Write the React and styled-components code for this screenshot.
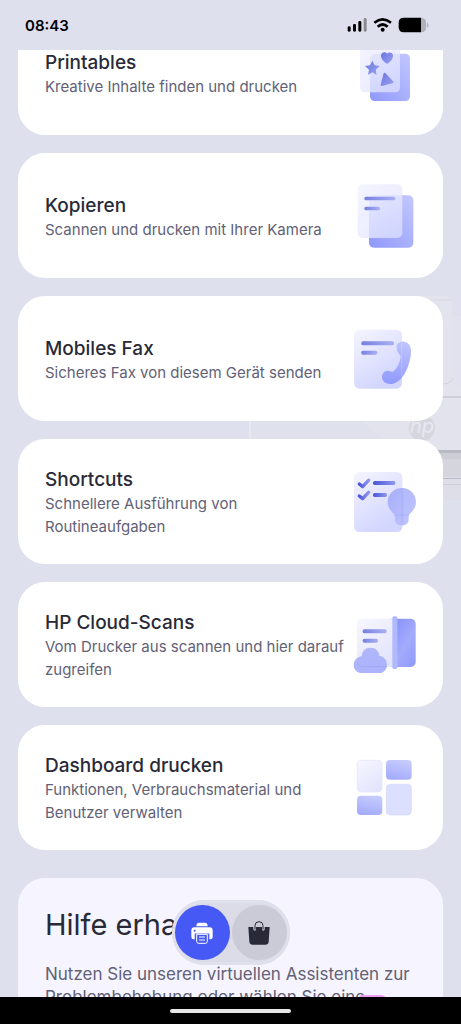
import React, { useLayoutEffect, useRef } from "react"
import styled, { createGlobalStyle } from "styled-components"

const cards = [
  {
    id: "printables",
    title: "Printables",
    text: "Kreative Inhalte finden und drucken",
    Icon: PrintablesIcon,
  },
  {
    id: "copy",
    title: "Kopieren",
    text: "Scannen und drucken mit Ihrer Kamera",
    Icon: CopyIcon,
  },
  {
    id: "fax",
    title: "Mobiles Fax",
    text: "Sicheres Fax von diesem Gerät senden",
    Icon: FaxIcon,
  },
  {
    id: "shortcuts",
    title: "Shortcuts",
    text: "Schnellere Ausführung von Routineaufgaben",
    Icon: ShortcutsIcon,
  },
  {
    id: "cloud-scans",
    title: "HP Cloud-Scans",
    text: "Vom Drucker aus scannen und hier darauf zugreifen",
    Icon: CloudScansIcon,
  },
  {
    id: "dashboard",
    title: "Dashboard drucken",
    text: "Funktionen, Verbrauchsmaterial und Benutzer verwalten",
    Icon: DashboardIcon,
  },
]

const START_SCROLL = 40

export default function App() {
  const scroller = useRef(null)

  useLayoutEffect(() => {
    scroller.current.scrollTop = START_SCROLL
  }, [])

  return (
    <>
      <GlobalStyle />
      <S_Page>
        <Gradients />
        <PrinterBackdrop />
        <S_StatusBar>
          <S_Time>08:43</S_Time>
          <StatusIcons />
        </S_StatusBar>
        <S_Scroller ref={scroller}>
          <S_Cards>
            {cards.map(({ id, title, text, Icon }) => (
              <li key={id}>
                <S_Card href={`#${id}`}>
                  <S_CardText>
                    <S_CardTitle>{title}</S_CardTitle>
                    <S_CardInfo>{text}</S_CardInfo>
                  </S_CardText>
                  <Icon />
                </S_Card>
              </li>
            ))}
          </S_Cards>
          <S_Help>
            <S_HelpTitle>Hilfe erhalten</S_HelpTitle>
            <S_HelpText>
              Nutzen Sie unseren virtuellen Assistenten zur Problembehebung oder
              wählen Sie eine
            </S_HelpText>
            <S_HelpBubble />
          </S_Help>
        </S_Scroller>
        <S_Nav>
          <S_NavButton $active aria-label="Drucker">
            <PrinterIcon />
          </S_NavButton>
          <S_NavButton aria-label="Shop">
            <BagIcon />
          </S_NavButton>
        </S_Nav>
        <S_HomeBar>
          <S_HomeIndicator />
        </S_HomeBar>
      </S_Page>
    </>
  )
}

// ICONS
function Gradients() {
  return (
    <S_Defs aria-hidden="true">
      <defs>
        <linearGradient id="paper" x1="0" y1="0" x2="0.5" y2="1">
          <stop offset="0" stopColor="#f5f5ff" />
          <stop offset="1" stopColor="#d2d5fe" />
        </linearGradient>
        <linearGradient id="pale" x1="0" y1="0" x2="0.6" y2="1">
          <stop offset="0" stopColor="#f7f7ff" />
          <stop offset="1" stopColor="#e3e5fd" />
        </linearGradient>
        <linearGradient id="glass" x1="0" y1="0" x2="1" y2="1">
          <stop offset="0" stopColor="#f4f4ff" stopOpacity="0.9" />
          <stop offset="1" stopColor="#dde0ff" stopOpacity="0.72" />
        </linearGradient>
        <linearGradient id="solid" x1="1" y1="0" x2="0" y2="1">
          <stop offset="0" stopColor="#c3c8ff" />
          <stop offset="1" stopColor="#8f98fb" />
        </linearGradient>
        <linearGradient id="tile" x1="0.6" y1="0" x2="0.3" y2="1">
          <stop offset="0" stopColor="#c6cbff" />
          <stop offset="1" stopColor="#a4abfb" />
        </linearGradient>
        <linearGradient id="deep" x1="0" y1="0" x2="1" y2="1">
          <stop offset="0" stopColor="#7d88f6" />
          <stop offset="0.6" stopColor="#a3abfc" />
          <stop offset="1" stopColor="#8f99fa" />
        </linearGradient>
        <linearGradient id="soft" x1="0" y1="0" x2="0" y2="1">
          <stop offset="0" stopColor="#bcc2ff" stopOpacity="0.95" />
          <stop offset="1" stopColor="#8d97fb" stopOpacity="0.95" />
        </linearGradient>
        <linearGradient id="cloud" x1="0" y1="0" x2="0" y2="1">
          <stop offset="0" stopColor="#aab1f8" stopOpacity="0.9" />
          <stop offset="1" stopColor="#a9b0fd" stopOpacity="0.95" />
        </linearGradient>
        <linearGradient id="bulb" x1="0" y1="0" x2="1" y2="1">
          <stop offset="0" stopColor="#a2a9f8" stopOpacity="0.9" />
          <stop offset="1" stopColor="#bfc5ff" stopOpacity="0.95" />
        </linearGradient>
        <linearGradient id="bar" x1="0" y1="0" x2="1" y2="0">
          <stop offset="0" stopColor="#7680e0" />
          <stop offset="1" stopColor="#a9b0f2" />
        </linearGradient>
        <linearGradient id="darkBar" x1="0" y1="0" x2="1" y2="0">
          <stop offset="0" stopColor="#4a56d6" />
          <stop offset="1" stopColor="#8e97ee" />
        </linearGradient>
        <linearGradient id="shape" x1="0" y1="0" x2="1" y2="1">
          <stop offset="0" stopColor="#6a75dd" />
          <stop offset="1" stopColor="#9ba3f4" />
        </linearGradient>
      </defs>
    </S_Defs>
  )
}

function PrintablesIcon() {
  return (
    <S_CardIcon viewBox="42 3 186 186" aria-hidden="true">
      <rect x="90" y="38" width="120" height="142" rx="14" fill="url(#solid)" />
      <rect x="60" y="4" width="120" height="150" rx="14" fill="url(#glass)" />
      <path
        d="M97 59l7 14 15 2-12 11 3 16-13-8-13 8 3-16-12-11 15-2z"
        fill="url(#shape)"
      />
      <path
        d="M141 69C132 63 122 54 123 43C124 33 136 31 141 38C147 31 159 34 159 44C159 55 150 63 141 69Z"
        fill="url(#shape)"
      />
      <path
        d="M131 97Q134 93 138 98L159 121Q163 126 157 127L126 135Q121 136 122 131Z"
        fill="url(#shape)"
      />
    </S_CardIcon>
  )
}

function CopyIcon() {
  return (
    <S_CardIcon viewBox="42 43 186 186" aria-hidden="true">
      <rect x="87" y="74" width="133" height="157" rx="15" fill="url(#solid)" />
      <rect x="53" y="41" width="134" height="161" rx="15" fill="url(#glass)" />
      <rect x="73" y="78" width="93" height="11" rx="5" fill="url(#bar)" />
      <rect x="73" y="108" width="47" height="11" rx="5" fill="url(#bar)" />
    </S_CardIcon>
  )
}

function FaxIcon() {
  return (
    <S_CardIcon viewBox="42 37 186 186" aria-hidden="true">
      <rect x="42" y="42" width="144" height="177" rx="16" fill="url(#paper)" />
      <rect x="64" y="77" width="98" height="12" rx="5" fill="url(#bar)" />
      <rect x="64" y="105" width="48" height="12" rx="5" fill="url(#bar)" />
      <path
        d="M170 97C168 84 180 76 193 78C208 82 213 92 213 108C211 150 187 205 150 205C135 205 125 195 126 182C127 170 138 162 148 166C152 168 155 170 160 167C172 158 180 140 182 121C180 116 171 112 170 97Z"
        fill="url(#soft)"
      />
      <path
        d="M185 79V182"
        stroke="#d9dcff"
        strokeWidth="2"
        strokeOpacity="0.6"
      />
    </S_CardIcon>
  )
}

function ShortcutsIcon() {
  return (
    <S_CardIcon viewBox="42 33 186 186" aria-hidden="true">
      <rect x="42" y="36" width="145" height="180" rx="16" fill="url(#paper)" />
      <path
        d="M58 72l10 8 18-19M58 108l10 8 18-19"
        fill="none"
        stroke="url(#darkBar)"
        strokeWidth="10"
        strokeLinecap="round"
        strokeLinejoin="round"
      />
      <rect x="99" y="63" width="67" height="12" rx="5" fill="url(#darkBar)" />
      <rect x="99" y="99" width="42" height="12" rx="5" fill="url(#darkBar)" />
      <path
        d="M186 84C210 84 228 103 228 126C228 141 220 152 210 161C206 165 206 170 206 178C206 190 198 196 186 196C173 196 165 190 165 178C165 170 165 165 161 161C151 152 143 141 143 126C143 103 162 84 186 84Z"
        fill="url(#bulb)"
      />
      <path d="M166 165H206" stroke="#a6aefc" strokeWidth="2" />
      <path
        d="M187 85V195"
        stroke="#8e98f6"
        strokeWidth="2"
        strokeOpacity="0.5"
      />
    </S_CardIcon>
  )
}

function CloudScansIcon() {
  return (
    <S_CardIcon viewBox="42 43 186 186" aria-hidden="true">
      <rect x="140" y="57" width="87" height="145" rx="15" fill="url(#deep)" />
      <path d="M66 57H160V201H66Q51 201 51 186V72Q51 57 66 57Z" fill="url(#pale)" />
      <rect x="157" y="50" width="15" height="158" rx="5" fill="#b1b9fd" />
      <rect x="68" y="89" width="72" height="12" rx="5" fill="url(#bar)" />
      <rect x="68" y="117" width="46" height="12" rx="5" fill="url(#bar)" />
      <path
        d="M65 220C51 220 41 210 41 196C41 182 51 172 65 170C66 154 76 144 91 144C107 144 117 154 118 168C131 170 141 181 141 195C141 210 131 220 117 220Z"
        fill="url(#cloud)"
      />
      <path
        d="M53 187Q54 201 67 201H140"
        fill="none"
        stroke="#8f98ee"
        strokeWidth="2"
        strokeOpacity="0.6"
      />
    </S_CardIcon>
  )
}

function DashboardIcon() {
  return (
    <S_CardIcon viewBox="42 39 186 186" aria-hidden="true">
      <rect x="52" y="49" width="74" height="95" rx="12" fill="url(#pale)" stroke="#dfe2ff" strokeWidth="2" />
      <rect x="138" y="48" width="77" height="59" rx="12" fill="url(#tile)" />
      <rect x="51" y="155" width="76" height="58" rx="12" fill="url(#tile)" />
      <rect x="139" y="121" width="75" height="92" rx="12" fill="#dcdffe" stroke="#d2d6ff" strokeWidth="2" />
    </S_CardIcon>
  )
}

function StatusIcons() {
  return (
    <S_StatusIcons viewBox="1042 52 246 48" aria-hidden="true">
      <rect x="1044" y="80" width="9" height="16" rx="4" />
      <rect x="1060" y="73" width="9" height="23" rx="4" />
      <rect x="1076" y="64" width="9" height="32" rx="4" />
      <rect x="1092" y="55" width="9" height="41" rx="4" fill="#8a8a93" />
      <g fill="none" stroke="#000" strokeWidth="8">
        <path d="M1124 69Q1149 49 1174 69" />
        <path d="M1134 81Q1149 68 1164 81" />
      </g>
      <circle cx="1149" cy="90" r="6" />
      <path
        d="M1264 54Q1279 55 1279 68V84Q1279 97 1264 98Z"
        fill="#b0b0ba"
      />
      <path d="M1264 54H1212Q1197 54 1197 69V83Q1197 98 1212 98H1264Z" />
      <path d="M1282 69Q1287 71 1287 76T1282 84Z" fill="#b0b0ba" />
    </S_StatusIcons>
  )
}

function PrinterIcon() {
  return (
    <S_NavIcon viewBox="0 0 66 66" aria-hidden="true">
      <path d="M16 13Q16 2 24 2H42Q50 2 50 13Z" fill="#fff" />
      <path
        d="M10 16H56Q65 16 65 26V45Q65 52 58 52H55V37H11V52H8Q1 52 1 45V26Q1 16 10 16Z"
        fill="#fff"
      />
      <circle cx="11" cy="26" r="3" fill="#4759f5" />
      <path d="M11 36H55" stroke="#4759f5" strokeWidth="3" />
      <path
        d="M17 37H49V58Q49 64 43 64H23Q17 64 17 58Z"
        fill="#4759f5"
        stroke="#fff"
        strokeWidth="3"
      />
      <path d="M24 45H42M24 54H42" stroke="#fff" strokeWidth="3" />
    </S_NavIcon>
  )
}

function BagIcon() {
  return (
    <S_NavIcon viewBox="0 0 66 72" aria-hidden="true">
      <path
        d="M21 26V14Q21 2 33 2T45 14V26"
        fill="none"
        stroke="#292a38"
        strokeWidth="3"
      />
      <path
        d="M1 18H16V26Q21 32 24 26V18H42V26Q45 32 50 26V18H65L62 62Q61 71 52 71H14Q5 71 4 62Z"
        fill="#292a38"
      />
    </S_NavIcon>
  )
}

function PrinterBackdrop() {
  return (
    <S_Backdrop viewBox="0 0 213 204" aria-hidden="true">
      <path d="M150 0H198Q203 0 204 6L206 91H150Z" fill="#e3e3ed" />
      <path d="M150 4H203" stroke="#d9d9e5" />
      <path d="M203 20H213V91H205Z" fill="#e1e2ee" />
      <path d="M194 88Q203 88 205 82" fill="none" stroke="#d3d3de" />
      <rect x="0" y="91" width="213" height="64" fill="#e3e3ed" />
      <path d="M0 122H110L150 155H0Z" fill="#dfe1ec" />
      <path d="M2 122V155" stroke="#e8e8f2" strokeWidth="2" />
      <rect x="0" y="100" width="213" height="2" fill="#cfcfda" />
      <ellipse cx="174" cy="132" rx="13" ry="13" fill="#d6d6df" />
      <S_Logo x="174" y="137" textAnchor="middle">
        hp
      </S_Logo>
      <rect x="150" y="154" width="63" height="50" fill="#dedee8" />
      <rect x="150" y="154" width="63" height="3" fill="#b9b9c2" />
      <rect x="150" y="157" width="63" height="6" fill="#cdcdd5" />
      <rect x="150" y="163" width="63" height="18" fill="#d5d5dd" />
      <rect x="150" y="182" width="63" height="1" fill="#b9b9c4" />
      <rect x="150" y="188" width="63" height="1" fill="#cfcfda" />
    </S_Backdrop>
  )
}

// STYLE
const GlobalStyle = createGlobalStyle`
  * {
    box-sizing: border-box;
  }

  body {
    margin: 0;
    font-family: Inter, Roboto, sans-serif;
    background: #dfe0ee;
  }
`

const S_Page = styled.main`
  position: relative;

  height: 100vh;
  overflow: hidden;

  display: flex;
  flex-direction: column;

  background: #dfe0ee;
`

const S_Defs = styled.svg`
  position: absolute;
  width: 0;
  height: 0;
`

const S_Backdrop = styled.svg`
  position: absolute;
  top: 296px;
  right: 0;

  width: 213px;
  height: 204px;
`

const S_Logo = styled.text`
  font-size: 20px;
  font-style: italic;
  font-weight: 500;
  fill: #e6e6ee;
`

const S_StatusBar = styled.header`
  position: relative;
  flex: none;

  height: 50px;
  padding: 0 32px 0 25px;

  display: flex;
  justify-content: space-between;
  align-items: center;
`

const S_Time = styled.div`
  font-size: 15px;
  font-weight: 600;
  color: #000;
`

const S_StatusIcons = styled.svg`
  width: 82px;
  height: 16px;
`

const S_Scroller = styled.div`
  position: relative;
  flex: 1;
  min-height: 0;

  padding: 0 18px;

  overflow-y: auto;
  scrollbar-width: none;
`

const S_Cards = styled.ul`
  margin: 0;
  padding: 0;
  list-style: none;

  display: flex;
  flex-direction: column;
  gap: 18px;
`

const S_Card = styled.a`
  min-height: 125px;
  padding: 0 27px;

  display: flex;
  justify-content: space-between;
  align-items: center;
  gap: 8px;

  background: white;
  border-radius: 27px;
  text-decoration: none;
`

const S_CardText = styled.div`
  flex: 1;

  padding-top: 2px;
`

const S_CardTitle = styled.h2`
  margin: 0;

  font-size: 19px;
  font-weight: 500;
  line-height: 25px;
  color: #292a38;
`

const S_CardInfo = styled.p`
  margin: 0;

  font-size: 15px;
  line-height: 23px;
  color: #626176;
`

const S_CardIcon = styled.svg`
  flex: none;

  width: 62px;
  height: 62px;
  overflow: visible;
`

const S_Help = styled.section`
  position: relative;

  margin-top: 28px;
  padding: 28px 27px 120px;

  background: #f5f4ff;
  border-radius: 27px;
`

const S_HelpTitle = styled.h1`
  margin: 0 0 19px;

  font-size: 29px;
  font-weight: 400;
  line-height: 38px;
  color: #292a38;
`

const S_HelpText = styled.p`
  margin: 0;

  font-size: 17px;
  line-height: 23px;
  color: #626176;
`

const S_HelpBubble = styled.div`
  position: absolute;
  top: 117px;
  right: 56px;

  width: 30px;
  height: 30px;

  background: #ee9df0;
  border-radius: 6px;
`

const S_Nav = styled.nav`
  position: absolute;
  bottom: 59px;
  left: 50%;
  transform: translateX(-50%);

  padding: 5px 3px;

  display: flex;
  gap: 2px;

  background: #dcdce8;
  border-radius: 33px;
  box-shadow: inset 0 0 0 3px #e0e0ec;
`

const S_NavButton = styled.button`
  width: 55px;
  height: 55px;
  padding: 0;

  display: flex;
  justify-content: center;
  align-items: center;

  border: none;
  border-radius: 50%;
  background: ${({ $active }) => ($active ? "#4759f5" : "#cbcbd7")};
  cursor: pointer;
`

const S_NavIcon = styled.svg`
  width: 22px;
  height: 24px;
`

const S_HomeBar = styled.footer`
  position: relative;
  flex: none;

  height: 27px;

  display: flex;
  justify-content: center;
  align-items: center;

  background: #000;
`

const S_HomeIndicator = styled.div`
  width: 121px;
  height: 4px;

  background: #e6e6e6;
  border-radius: 2px;
`
